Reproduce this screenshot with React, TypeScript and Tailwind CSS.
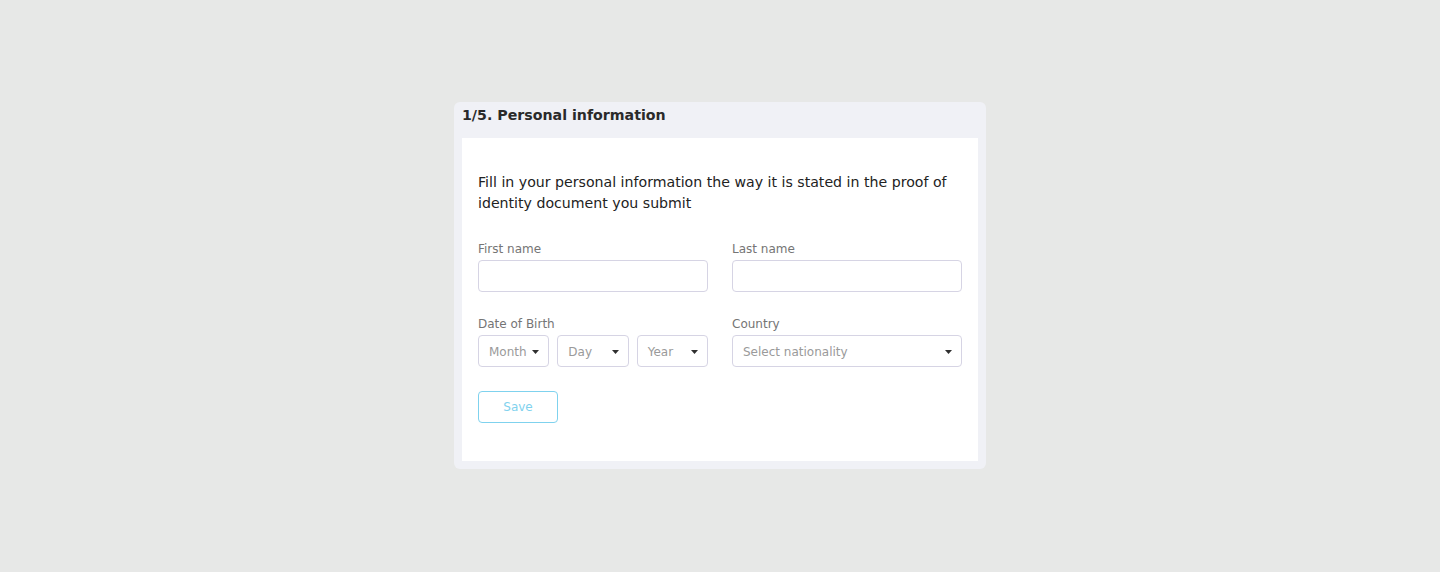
import { useState } from 'react'

const font = { fontFamily: '"DejaVu Sans", Verdana, sans-serif' }

function Caret() {
  return (
    <svg width="7" height="4" viewBox="0 0 7 4" className="shrink-0">
      <path d="M0 0h7L3.5 4z" fill="#2f2f2f" />
    </svg>
  )
}

function Field({ label, children }: { label: string; children: React.ReactNode }) {
  return (
    <div className="flex flex-col">
      <label className="mb-[2px] text-[12px] leading-[18px] text-[#757575]">{label}</label>
      {children}
    </div>
  )
}

function Select({ placeholder }: { placeholder: string }) {
  return (
    <div className="flex h-8 items-center justify-between rounded border border-[#d6d4e4] bg-white pl-[10px] pr-[9px] pt-[1px] text-[12px] text-[#9a9a9a]">
      <span>{placeholder}</span>
      <Caret />
    </div>
  )
}

export default function App() {
  const [first, setFirst] = useState('')
  const [last, setLast] = useState('')

  return (
    <div className="flex min-h-[572px] justify-center bg-[#e7e8e7] pt-[102px]" style={font}>
      <div className="h-fit w-[532px] rounded-md bg-[#f0f1f6] px-2 pb-2">
        <h2 className="flex h-9 items-start pt-[2px] text-[14.2px] font-bold leading-[22px] text-[#2a2a2a]">
          1/5. Personal information
        </h2>
        <div className="bg-white px-4 pb-[38px] pt-[33px]">
          <p className="pt-[1px] text-[14.15px] leading-[21px] text-[#222]">
            Fill in your personal information the way it is stated in the proof of identity document you submit
          </p>
          <div className="mt-[26px] grid grid-cols-2 gap-x-6 gap-y-[23px]">
            <Field label="First name">
              <input
                value={first}
                onChange={(e) => setFirst(e.target.value)}
                className="h-8 rounded border border-[#d6d4e4] px-2 text-[13px] outline-none"
              />
            </Field>
            <Field label="Last name">
              <input
                value={last}
                onChange={(e) => setLast(e.target.value)}
                className="h-8 rounded border border-[#d6d4e4] px-2 text-[13px] outline-none"
              />
            </Field>
            <Field label="Date of Birth">
              <div className="grid grid-cols-3 gap-2">
                <Select placeholder="Month" />
                <Select placeholder="Day" />
                <Select placeholder="Year" />
              </div>
            </Field>
            <Field label="Country">
              <Select placeholder="Select nationality" />
            </Field>
          </div>
          <button className="mt-6 h-8 w-20 rounded border border-[#7fd2ee] text-[12px] text-[#7fd2ee]">
            Save
          </button>
        </div>
      </div>
    </div>
  )
}
